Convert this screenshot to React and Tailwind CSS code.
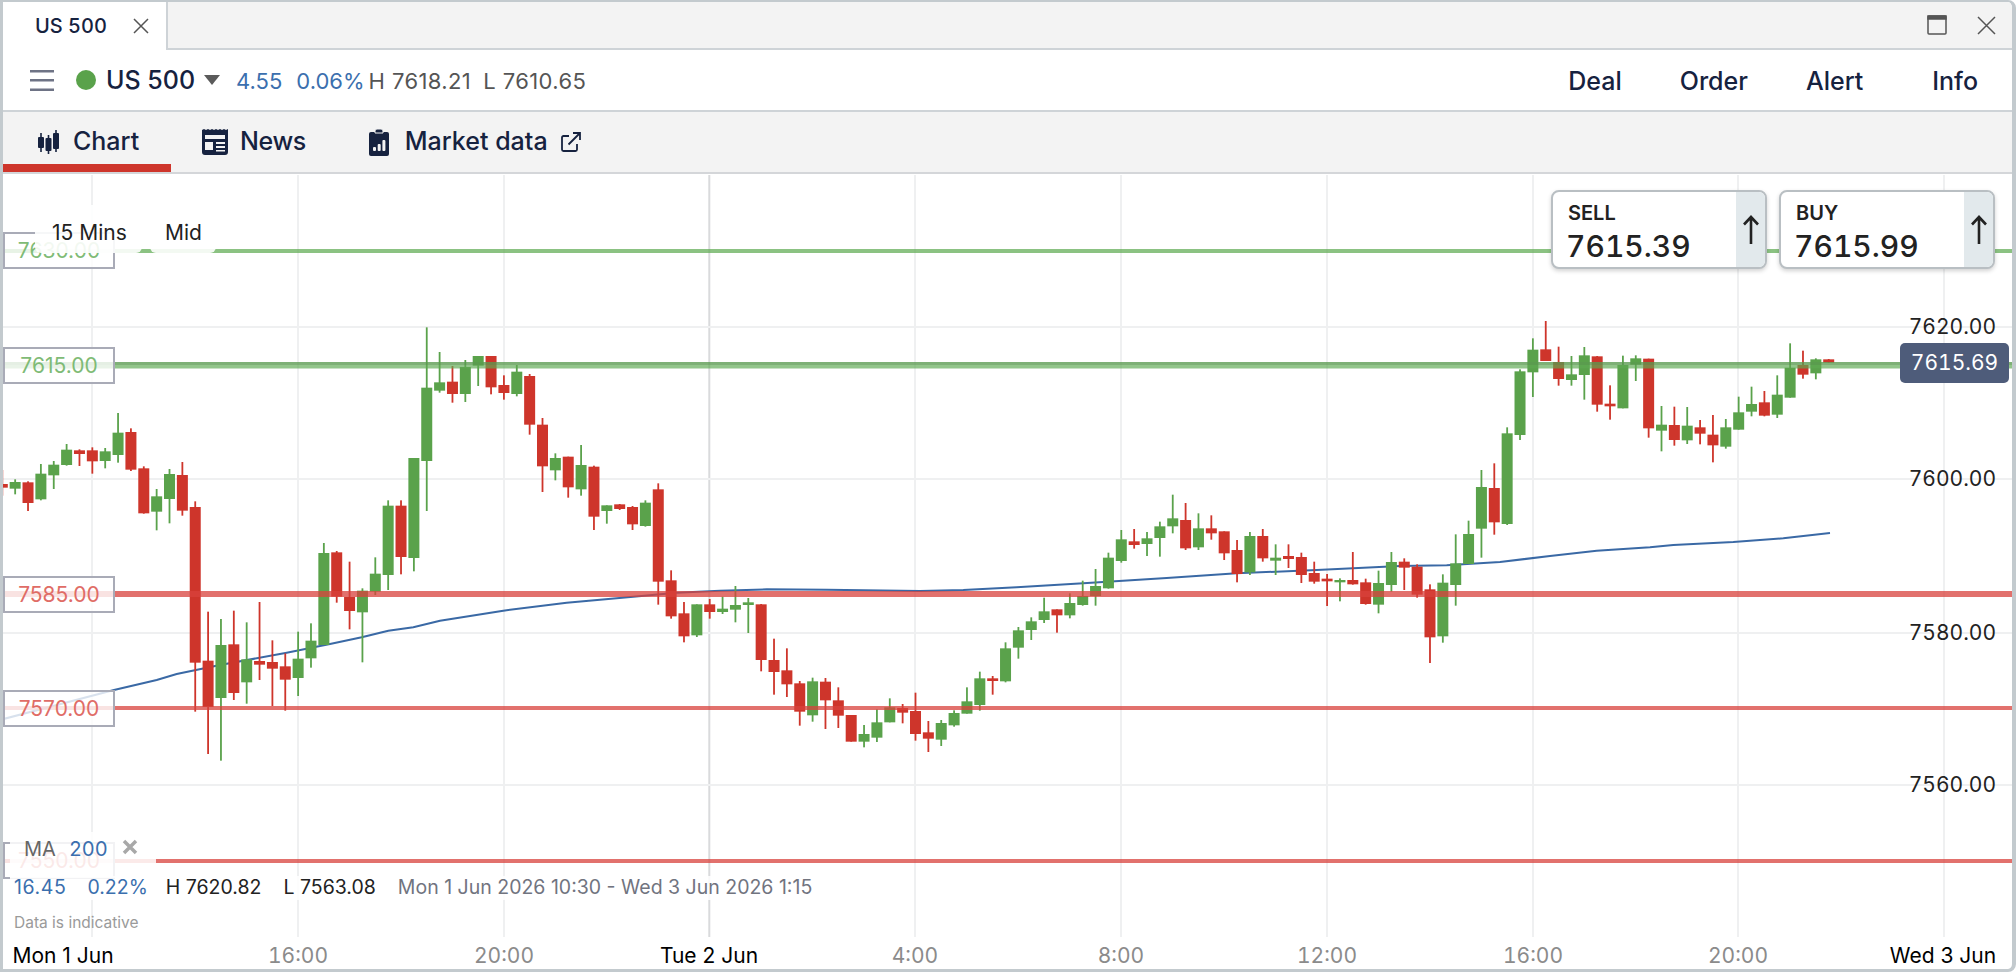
import React from 'react';

const GREEN = '#5aa24b';
const RED = '#ce352b';
const NAVY = '#16223f';

const BAR_GAP = 12.862;

// [up, wick top, body top, body bottom, wick bottom], read off the chart
const BARS_A = [
  [0,450,492,503,527],[1,478,486,506,523],[0,484,487,549,573],[1,432,461,538,541],[1,423,434,466,507],
  [1,372,389,435,437],[0,388,391,402,438],[0,382,391,424,461],[1,384,394,423,445],[1,279,338,405,428],
  [0,325,336,449,453],[0,439,445,580,581],[1,507,529,575,631],[1,447,462,537,610],[0,426,465,572,587],
  [0,544,561,1028,1175],[0,875,1022,1161,1302],[1,897,975,1134,1322],[0,872,973,1119,1140],[1,907,1018,1087,1151],
  [0,846,1023,1034,1080],[0,961,1026,1046,1158],[0,1000,1039,1079,1172],[1,935,1016,1074,1128],[1,910,962,1015,1043],
  [1,669,699,975,975],[0,693,697,830,848],[0,725,831,873,928],[1,805,812,877,1027],[1,712,761,815,825],
  [1,541,557,765,810],[0,541,557,711,763],[1,414,414,714,754],[1,22,203,423,573],[1,96,187,212,218],
  [0,138,185,222,248],[1,120,141,222,246],[1,108,108,137,198],[0,108,108,202,223],[0,166,195,219,239],
  [1,135,155,222,229],
];
const BARS_B = [
  [0,192,198,344,374],[0,324,344,469,546],[1,430,444,481,511],[0,440,440,532,563],[1,405,465,538,557],
  [0,467,470,620,660],[1,586,586,603,641],[0,582,583,597,600],[0,588,591,643,660],[1,571,578,648,650],
  [0,520,538,815,884],[0,781,811,919,926],[0,876,910,979,997],[1,883,883,976,981],[0,867,883,906,926],
  [1,860,896,906,912],[1,828,885,899,937],[1,864,877,885,969],[0,882,883,1050,1084],[0,986,1050,1086,1154],
  [0,1015,1081,1123,1161],[0,1113,1120,1205,1247],[1,1103,1114,1216,1235],[0,1104,1115,1171,1257],[0,1132,1171,1217,1254],
  [0,1215,1215,1295,1295],[1,1245,1272,1295,1312],[1,1198,1237,1283,1296],[1,1165,1192,1237,1237],[0,1182,1194,1208,1240],
  [0,1148,1203,1272,1292],
];
const BARS_C = [
  [0,813,847,866,906],[1,810,819,869,888],[1,781,789,826,830],[1,712,754,791,791],[1,665,685,765,782],
  [0,678,685,693,734],[1,577,595,694,697],[1,531,541,593,626],[1,502,514,540,570],[1,443,484,510,519],
  [0,478,478,496,548],[1,430,459,496,505],[1,392,438,465,467],[1,357,408,438,467],[1,308,323,415,416],
  [1,240,268,333,338],[0,237,274,285,296],[1,246,265,282,318],[1,215,229,264,320],[1,134,205,229,250],
  [0,159,210,295,300],[1,190,235,292,300],[0,196,235,250,269],[0,244,244,310,330],[0,270,300,372,397],
  [1,246,258,367,375],[0,237,258,325,335],[1,283,323,332,375],[0,283,318,327,354],[0,308,321,375,399],
  [0,335,369,395,401],[0,372,386,394,468],[1,385,390,397,454],[0,306,390,403,404],[0,386,397,462,464],
  [1,362,399,464,490],[1,306,336,405,425],[0,325,335,353,420],
];
const BARS_D = [
  [0,793,800,884,893],[0,853,868,1012,1089],[1,823,848,1009,1028],[1,703,790,855,917],[1,662,702,792,792],
  [1,510,561,686,773],[0,490,564,667,704],[1,382,400,672,675],[1,208,214,405,420],[1,115,149,217,291],
  [0,63,148,183,183],[0,140,186,237,257],[1,168,223,240,257],[1,141,166,225,299],[0,168,169,314,335],
  [0,256,311,319,359],[1,167,195,325,325],[1,166,175,194,243],[0,176,176,385,413],[1,318,374,392,454],
  [0,320,375,420,437],[1,321,377,421,432],[0,360,382,401,433],[0,345,404,436,487],[1,357,382,440,446],
  [1,290,337,389,389],[1,260,312,335,349],[0,273,307,347,349],[1,226,284,344,354],[1,130,203,293,293],
  [0,152,195,224,236],[1,175,178,220,238],[0,177,178,188,188],
];

const toPage = (rows, y0, from) =>
  rows.map(([up, wt, bt, bb, wb], i) => ({
    up,
    x: 2.3 + BAR_GAP * (from + i),
    wt: y0 + wt / 3,
    bt: y0 + bt / 3,
    bb: y0 + bb / 3,
    wb: y0 + wb / 3,
  }));

const bars = [
  ...toPage(BARS_A, 320, 0),
  ...toPage(BARS_B, 310, 41),
  ...toPage(BARS_C, 450, 72),
  ...toPage(BARS_D, 300, 110),
];

const maLine = (pts, x0, y0) => pts.map(([x, y]) => `${(x0 + x / 3).toFixed(1)},${(y0 + y / 3).toFixed(1)}`).join(' ');

const maPoints = [
  maLine([[7,1198],[342,1110],[470,1080],[530,1062],[660,1035],[860,998],[990,972],[1085,952],[1165,932],[1240,922]], 0, 320),
  maLine([[120,932],[310,902],[500,878],[700,860],[830,848],[960,842],[1100,838],[1280,839],[1560,843]], 400, 310),
  maLine([[190,420],[350,412],[550,400],[800,384],[1010,370],[1250,360]], 900, 450),
  maLine([[0,798],[140,796],[300,786],[450,768],[590,752],[750,742],[820,735],[1000,726],[1150,715],[1290,699]], 1400, 300),
].join(' ');

const V_GRID = [92, 298, 504, 1121, 915, 1327, 1533, 1738, 1944];
const H_GRID = [327, 479, 633, 785];

const Chart = () => (
  <svg className="absolute left-0 top-0" width="2009" height="795" viewBox="3 174 2009 795">
    {V_GRID.map((x) => (
      <rect key={x} x={x - 1} y={175} width={2} height={762} fill="#eff0f1" />
    ))}
    <rect x={708.3} y={175} width={2} height={762} fill="#d9dadc" />
    {H_GRID.map((y) => (
      <rect key={y} x={3} y={y - 1} width={2009} height={2} fill="#eff0f1" />
    ))}
    <polyline points={maPoints} fill="none" stroke="#3a69a5" strokeWidth="2" />
    {bars.map((b, i) => (
      <g key={i} fill={b.up ? GREEN : RED}>
        <rect x={b.x - 0.9} y={b.wt} width={1.8} height={b.wb - b.wt} />
        <rect x={b.x - 5.5} y={b.bt} width={11} height={Math.max(b.bb - b.bt, 2)} />
      </g>
    ))}
    <rect x={3} y={249} width={2009} height={4} fill="#5eaa52" fillOpacity="0.72" />
    <rect x={3} y={362} width={2009} height={3} fill="#5a9a50" fillOpacity="0.78" />
    <rect x={3} y={365} width={2009} height={3.5} fill="#5eaa52" fillOpacity="0.68" />
    <rect x={3} y={591} width={2009} height={6} fill="#d8423c" fillOpacity="0.75" />
    <rect x={3} y={706} width={2009} height={4} fill="#d8423c" fillOpacity="0.75" />
    <rect x={3} y={859} width={2009} height={4} fill="#d8423c" fillOpacity="0.75" />
  </svg>
);

const PriceLabel = ({ top, value, color }) => (
  <div
    className={`absolute left-0 flex h-[37px] w-[112px] items-center justify-center border-2 border-[#a9abb7] bg-white/80 text-[21px] ${color}`}
    style={{ top }}
  >
    {value}
  </div>
);

const AxisPrice = ({ top, value }) => (
  <div className="absolute right-[16px] text-[21px] leading-[24px] tabular-nums text-[#222]" style={{ top }}>
    {value}
  </div>
);

const AxisTime = ({ x, label, strong }) => (
  <div
    className={`absolute top-[770px] -translate-x-1/2 whitespace-nowrap text-[21px] leading-[24px] ${strong ? 'text-black' : 'tabular-nums text-[#8b8b8b]'}`}
    style={{ left: x }}
  >
    {label}
  </div>
);

const QuoteBox = ({ label, price }) => (
  <div className="flex h-[79px] w-[216px] overflow-hidden rounded-[8px] border-2 border-[#b9bfc3] bg-white shadow-[0_2px_4px_rgba(0,0,0,0.18)]">
    <div className="flex flex-1 flex-col pl-[15px] pt-[9px]">
      <span className="text-[20px] font-semibold leading-[24px] text-[#222]">{label}</span>
      <span className="ml-[-2px] mt-[3px] text-[30px] leading-[36px] tabular-nums text-[#222]" style={{ fontWeight: 450 }}>{price}</span>
    </div>
    <div className="flex w-[29px] items-start justify-center bg-[#e2e9ec] pt-[23px]">
      <svg width="16" height="30" viewBox="0 0 16 30" fill="none" stroke="#222" strokeWidth="2.6">
        <path d="M8 2V29M1 9.5L8 2l7 7.5" />
      </svg>
    </div>
  </div>
);

const CandleIcon = () => (
  <svg width="22" height="24" viewBox="0 0 22 24" fill={NAVY}>
    <rect x="1" y="7" width="6" height="11" rx="1" />
    <rect x="3.2" y="3" width="1.6" height="19" />
    <rect x="8.5" y="8" width="6" height="13" rx="1" />
    <rect x="10.7" y="5" width="1.6" height="19" />
    <rect x="16" y="3" width="6" height="16" rx="1" />
    <rect x="18.2" y="0" width="1.6" height="22" />
  </svg>
);

const NewsIcon = () => (
  <svg width="26" height="26" viewBox="0 0 26 26">
    <path
      d="M0 1l2-1 2 1 2-1 2 1 2-1 2 1 2-1 2 1 2-1 2 1 2-1 2 1 2-1v23a3 3 0 0 1-3 3H3a3 3 0 0 1-3-3z"
      fill={NAVY}
    />
    <rect x="3" y="6" width="20" height="4" fill="#f3f3f3" />
    <rect x="3" y="13" width="8" height="8" fill="#f3f3f3" />
    <rect x="14" y="13" width="9" height="2" fill="#f3f3f3" />
    <rect x="14" y="17" width="9" height="2" fill="#f3f3f3" />
    <rect x="14" y="21" width="9" height="1.5" fill="#f3f3f3" />
  </svg>
);

const MarketIcon = () => (
  <svg width="20" height="27" viewBox="0 0 20 27">
    <rect x="0" y="3" width="20" height="24" rx="2" fill={NAVY} />
    <path d="M6 4V2a2 2 0 0 1 2-2h4a2 2 0 0 1 2 2v2z" fill={NAVY} stroke="#f3f3f3" strokeWidth="1" />
    <rect x="4" y="18" width="3" height="4" rx="1" fill="#f3f3f3" />
    <rect x="8.7" y="15" width="3" height="7" rx="1" fill="#f3f3f3" />
    <rect x="13.4" y="11" width="3" height="11" rx="1" fill="#f3f3f3" />
  </svg>
);

const ExternalIcon = () => (
  <svg width="20" height="20" viewBox="0 0 20 20" fill="none" stroke={NAVY} strokeWidth="1.8">
    <path d="M8 4H2.5A1.5 1.5 0 0 0 1 5.500V17.500A1.500 1.500 0 0 0 2.500 19H14.500A1.500 1.500 0 0 0 16 17.500V12" />
    <path d="M7.500 12.500L19 1M12 1h7v7" />
  </svg>
);

const App = () => (
  <div className="flex h-[972px] w-[2016px] flex-col overflow-hidden rounded-r-[8px] border-b-[3px] border-l-[3px] border-r-[4px] border-t-2 border-[#c3cace] bg-white font-[Inter,sans-serif]">
    {/* window tab strip */}
    <div className="flex h-[48px] shrink-0 items-stretch border-b-2 border-[#ced3d7] bg-[#f3f3f3]">
      <div className="mb-[-2px] flex w-[165px] items-center gap-[26px] border-r-2 border-[#ced3d7] bg-white pl-[32px]">
        <span className="text-[20px] font-medium tabular-nums" style={{ color: NAVY }}>US 500</span>
        <svg width="16" height="16" viewBox="0 0 16 16" stroke="#555" strokeWidth="1.500">
          <path d="M1 1l14 14M15 1L1 15" />
        </svg>
      </div>
      <div className="ml-auto flex items-center gap-[30px] pr-[16px]">
        <svg width="20" height="20" viewBox="0 0 20 20" fill="none" stroke="#555" strokeWidth="1.500">
          <rect x="1" y="1" width="18" height="18" rx="1" />
          <rect x="1" y="1" width="18" height="3" fill="#555" />
        </svg>
        <svg width="19" height="19" viewBox="0 0 19 19" stroke="#555" strokeWidth="1.500">
          <path d="M1 1l17 17M18 1L1 18" />
        </svg>
      </div>
    </div>

    {/* instrument toolbar */}
    <div className="flex h-[62px] shrink-0 items-center border-b-2 border-[#ced3d7] pl-[27px] pr-[34px]">
      <svg width="24" height="21" viewBox="0 0 24 21" fill="#6e7385">
        <rect y="0" width="24" height="2.500" />
        <rect y="9" width="24" height="2.500" />
        <rect y="18.500" width="24" height="2.500" />
      </svg>
      <span className="ml-[22px] h-[20px] w-[20px] rounded-full" style={{ backgroundColor: GREEN }} />
      <span className="ml-[10px] pt-[2px] text-[25px] font-medium" style={{ color: NAVY }}>US 500</span>
      <svg className="ml-[9px]" width="16" height="10" viewBox="0 0 16 10" fill="#5b5b5b">
        <path d="M0 0h16L8 10z" />
      </svg>
      <div className="ml-[16px] flex items-center pt-[2px] text-[22px] text-[#555]">
        <span className="text-[#3b6fae]">4.55</span>
        <span className="ml-[14px] text-[#3b6fae]">0.06%</span>
        <span className="ml-[4px] tracking-[0.4px]">H 7618.21</span>
        <span className="ml-[12px] tracking-[0.4px]">L 7610.65</span>
      </div>
      <div className="ml-auto flex items-center gap-[58px] pt-[3px] text-[25px] font-medium" style={{ color: NAVY }}>
        <span>Deal</span>
        <span>Order</span>
        <span>Alert</span>
        <span className="ml-[11px]">Info</span>
      </div>
    </div>

    {/* panel tabs */}
    <div className="flex h-[62px] shrink-0 items-stretch border-b-2 border-[#d4d6d9] bg-[#f3f3f3] text-[25px] font-medium" style={{ color: NAVY }}>
      <div className="flex w-[168px] items-center gap-[14px] border-b-[8px] border-[#ce352b] pl-[34px] pt-[8px]">
        <CandleIcon />
        <span>Chart</span>
      </div>
      <div className="ml-[31px] flex items-center gap-[13px]">
        <NewsIcon />
        <span className="ml-[-1px] mr-[-1px] tracking-[-0.4px]">News</span>
      </div>
      <div className="ml-[64px] flex items-center gap-[16px]">
        <MarketIcon />
        <span className="mr-[-3px]">Market data</span>
        <ExternalIcon />
      </div>
    </div>

    {/* chart canvas */}
    <div className="relative flex-1 overflow-hidden text-[21px]">
      <Chart />

      <PriceLabel top={58} value="7630.00" color="text-[#7fbb76]" />
      <PriceLabel top={173} value="7615.00" color="text-[#7fbb76]" />
      <PriceLabel top={402} value="7585.00" color="text-[#e06c66]" />
      <PriceLabel top={516} value="7570.00" color="text-[#e06c66]" />
      <PriceLabel top={668} value="7550.00" color="text-[#e06c66]" />

      <div className="absolute left-[32px] top-[31px] flex gap-[8px] text-[21px] leading-[56px] text-[#222]">
        <span className="h-[48px] w-[107px] rounded-b-[6px] bg-white/90 pl-[17px]">15 Mins</span>
        <span className="h-[48px] w-[66px] rounded-b-[6px] bg-white/90 pl-[15px]">Mid</span>
      </div>

      <div className="absolute left-[7px] top-[658px] flex h-[46px] w-[146px] items-start gap-[13px] bg-white/85 pl-[14px] pt-[4px] text-[20px] leading-[26px]">
        <span className="text-[#666]">MA</span>
        <span className="tabular-nums text-[#3b6fae]">200</span>
        <svg className="ml-[1px] mt-[3px]" width="16" height="16" viewBox="0 0 16 16" stroke="#a8a8a8" strokeWidth="3.500">
          <path d="M2 2l12 12M14 2L2 14" />
        </svg>
      </div>

      <div className="absolute left-[7px] top-[702px] flex h-[24px] items-center bg-white/85 pl-[4px] pr-[6px] text-[19.500px]">
        <span className="tracking-[0.6px] text-[#3b6fae]">16.45</span>
        <span className="ml-[21px] text-[#3b6fae]">0.22%</span>
        <span className="ml-[18px] text-[#222]">H 7620.82</span>
        <span className="ml-[22px] text-[#222]">L 7563.08</span>
        <span className="ml-[22px] text-[#71747f]">Mon 1 Jun 2026 10:30 - Wed 3 Jun 2026 1:15</span>
      </div>

      <div className="absolute left-[11px] top-[739px] text-[15.500px] leading-[20px] text-[#9a9a9a]">Data is indicative</div>

      <AxisPrice top={141} value="7620.00" />
      <AxisPrice top={293} value="7600.00" />
      <AxisPrice top={447} value="7580.00" />
      <AxisPrice top={599} value="7560.00" />
      <div className="absolute left-[1897px] top-[169px] flex h-[40px] w-[109px] items-center justify-center rounded-[5px] bg-[#4e5c7a] text-[21px] tabular-nums text-white">
        7615.69
      </div>

      <AxisTime x={60} label="Mon 1 Jun" strong />
      <AxisTime x={295} label="16:00" />
      <AxisTime x={501} label="20:00" />
      <AxisTime x={706} label="Tue 2 Jun" strong />
      <AxisTime x={912} label="4:00" />
      <AxisTime x={1118} label="8:00" />
      <AxisTime x={1324} label="12:00" />
      <AxisTime x={1530} label="16:00" />
      <AxisTime x={1735} label="20:00" />
      <AxisTime x={1940} label="Wed 3 Jun" strong />

      <div className="absolute left-[1548px] top-[16px] flex gap-[12px]">
        <QuoteBox label="SELL" price="7615.39" />
        <QuoteBox label="BUY" price="7615.99" />
      </div>
    </div>
  </div>
);

export default App;
